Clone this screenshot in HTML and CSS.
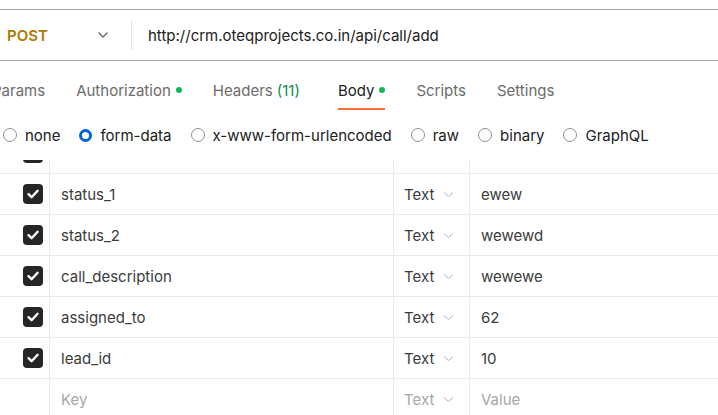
FILE: index.html
```html
<!DOCTYPE html>
<html>
<head>
<meta charset="utf-8">
<link rel="stylesheet" href="styles.css">
</head>
<body>
<div class="urlbar">
  <div class="method">
    <span class="method-name">POST</span>
    <svg class="method-chev" width="12" height="8" viewBox="0 0 12 8"><path d="M1.5 1.5 L6 6 L10.5 1.5" fill="none" stroke="#6b6b6b" stroke-width="1.4"/></svg>
  </div>
  <div class="divider"></div>
  <div class="url">http://crm.oteqprojects.co.in/api/call/add</div>
</div>

<div class="tabs">
  <div class="tab">Params</div>
  <div class="tab">Authorization<span class="dot"></span></div>
  <div class="tab headers">Headers <span class="count">(11)</span></div>
  <div class="tab active">Body<span class="dot"></span></div>
  <div class="tab">Scripts</div>
  <div class="tab">Settings</div>
</div>

<div class="radios">
  <label class="radio"><span class="circle"></span>none</label>
  <label class="radio"><span class="circle selected"></span>form-data</label>
  <label class="radio"><span class="circle"></span>x-www-form-urlencoded</label>
  <label class="radio"><span class="circle"></span>raw</label>
  <label class="radio"><span class="circle"></span>binary</label>
  <label class="radio"><span class="circle"></span>GraphQL</label>
</div>

<div class="table-view">
  <div class="table">
    <div class="row">
      <div class="c-check"><span class="cb"><svg width="20" height="20" viewBox="0 0 20 20"><path d="M5.5 10.2 L8.6 13.2 L14.6 6.8" fill="none" stroke="#fff" stroke-width="2.4" stroke-linecap="round" stroke-linejoin="round"/></svg></span></div>
      <div class="c-key">status</div>
      <div class="c-type">Text</div>
      <div class="c-val">1</div>
    </div>
    <div class="row">
      <div class="c-check"><span class="cb"><svg width="20" height="20" viewBox="0 0 20 20"><path d="M5.5 10.2 L8.6 13.2 L14.6 6.8" fill="none" stroke="#fff" stroke-width="2.4" stroke-linecap="round" stroke-linejoin="round"/></svg></span></div>
      <div class="c-key">status_1</div>
      <div class="c-type">Text<svg class="tchev" width="11" height="7" viewBox="0 0 11 7"><path d="M1 1.5 L5.5 5.5 L10 1.5" fill="none" stroke="#b3b3b3" stroke-width="1"/></svg></div>
      <div class="c-val">ewew</div>
    </div>
    <div class="row">
      <div class="c-check"><span class="cb"><svg width="20" height="20" viewBox="0 0 20 20"><path d="M5.5 10.2 L8.6 13.2 L14.6 6.8" fill="none" stroke="#fff" stroke-width="2.4" stroke-linecap="round" stroke-linejoin="round"/></svg></span></div>
      <div class="c-key">status_2</div>
      <div class="c-type">Text<svg class="tchev" width="11" height="7" viewBox="0 0 11 7"><path d="M1 1.5 L5.5 5.5 L10 1.5" fill="none" stroke="#b3b3b3" stroke-width="1"/></svg></div>
      <div class="c-val">wewewd</div>
    </div>
    <div class="row">
      <div class="c-check"><span class="cb"><svg width="20" height="20" viewBox="0 0 20 20"><path d="M5.5 10.2 L8.6 13.2 L14.6 6.8" fill="none" stroke="#fff" stroke-width="2.4" stroke-linecap="round" stroke-linejoin="round"/></svg></span></div>
      <div class="c-key">call_description</div>
      <div class="c-type">Text<svg class="tchev" width="11" height="7" viewBox="0 0 11 7"><path d="M1 1.5 L5.5 5.5 L10 1.5" fill="none" stroke="#b3b3b3" stroke-width="1"/></svg></div>
      <div class="c-val">wewewe</div>
    </div>
    <div class="row">
      <div class="c-check"><span class="cb"><svg width="20" height="20" viewBox="0 0 20 20"><path d="M5.5 10.2 L8.6 13.2 L14.6 6.8" fill="none" stroke="#fff" stroke-width="2.4" stroke-linecap="round" stroke-linejoin="round"/></svg></span></div>
      <div class="c-key">assigned_to</div>
      <div class="c-type">Text<svg class="tchev" width="11" height="7" viewBox="0 0 11 7"><path d="M1 1.5 L5.5 5.5 L10 1.5" fill="none" stroke="#b3b3b3" stroke-width="1"/></svg></div>
      <div class="c-val">62</div>
    </div>
    <div class="row">
      <div class="c-check"><span class="cb"><svg width="20" height="20" viewBox="0 0 20 20"><path d="M5.5 10.2 L8.6 13.2 L14.6 6.8" fill="none" stroke="#fff" stroke-width="2.4" stroke-linecap="round" stroke-linejoin="round"/></svg></span></div>
      <div class="c-key">lead_id</div>
      <div class="c-type">Text<svg class="tchev" width="11" height="7" viewBox="0 0 11 7"><path d="M1 1.5 L5.5 5.5 L10 1.5" fill="none" stroke="#b3b3b3" stroke-width="1"/></svg></div>
      <div class="c-val">10</div>
    </div>
    <div class="row placeholder">
      <div class="c-check"></div>
      <div class="c-key">Key</div>
      <div class="c-type">Text<svg class="tchev" width="11" height="7" viewBox="0 0 11 7"><path d="M1 1.5 L5.5 5.5 L10 1.5" fill="none" stroke="#b3b3b3" stroke-width="1"/></svg></div>
      <div class="c-val">Value</div>
    </div>
  </div>
</div>
</body>
</html>
```

FILE: styles.css
```css
html, body {
  margin: 0;
  padding: 0;
  background: #ffffff;
}
body {
  font-family: Inter, "Noto Sans", sans-serif;
  font-size: 15px;
  color: #212121;
  width: 718px;
  height: 415px;
  overflow: hidden;
}

.urlbar {
  margin-top: 9px;
  height: 50px;
  border-top: 1px solid #a6a6a6;
  border-bottom: 1px solid #a6a6a6;
  display: flex;
  align-items: center;
}
.method {
  width: 124px;
  padding-left: 7px;
  display: flex;
  align-items: center;
}
.method-name {
  font-weight: 600;
  color: #ad7a03;
  font-size: 15px;
  width: 90px;
}
.method-chev {
  display: block;
}
.divider {
  width: 1px;
  height: 30px;
  background: #e3e3e3;
}
.url {
  padding-left: 16px;
  color: #212121;
}

.tabs {
  display: flex;
  margin-left: -8px;
  gap: 31px;
}
.tab {
  display: flex;
  align-items: center;
  padding-top: 19px;
  height: 20px;
  padding-bottom: 8px;
  border-bottom: 2px solid transparent;
  color: #6b6b6b;
}
.tab.headers {
  margin-right: 7px;
}
.tab.active {
  color: #212121;
  border-bottom-color: #ff6c37;
}
.count {
  color: #0f8a55;
  margin-left: 4px;
}
.dot {
  width: 6px;
  height: 6px;
  border-radius: 50%;
  background: #0cbb52;
  margin-left: 5px;
}

.radios {
  display: flex;
  align-items: center;
  height: 20px;
  padding: 15px 0 15px 3px;
  gap: 19px;
}
.radio {
  display: flex;
  align-items: center;
  gap: 8px;
  color: #212121;
}
.circle {
  width: 14px;
  height: 14px;
  box-sizing: border-box;
  border: 1px solid #8f8f8f;
  border-radius: 50%;
}
.circle.selected {
  border: 3.5px solid #0265d2;
  width: 13px;
  height: 13px;
}

.table-view {
  height: 255px;
  overflow: hidden;
}
.table {
  margin-top: -27px;
}
.row {
  display: flex;
  height: 40px;
  border-bottom: 1px solid #ebebeb;
}
.row > div {
  display: flex;
  align-items: center;
  box-sizing: border-box;
  border-right: 1px solid #ebebeb;
}
.c-check {
  width: 50px;
  padding-left: 23px;
}
.cb {
  width: 20px;
  height: 20px;
  border-radius: 4px;
  background: #262626;
  display: block;
}
.cb svg {
  display: block;
}
.c-key {
  width: 344px;
  padding-left: 11px;
  color: #3b3b3b;
}
.c-type {
  width: 76px;
  padding-left: 10px;
  color: #3b3b3b;
}
.tchev {
  margin-left: 9px;
}
.c-val {
  flex: 1;
  padding-left: 11px;
  color: #3b3b3b;
  border-right: none !important;
}
.placeholder .c-key,
.placeholder .c-type,
.placeholder .c-val {
  color: #a6a6a6;
}
```
